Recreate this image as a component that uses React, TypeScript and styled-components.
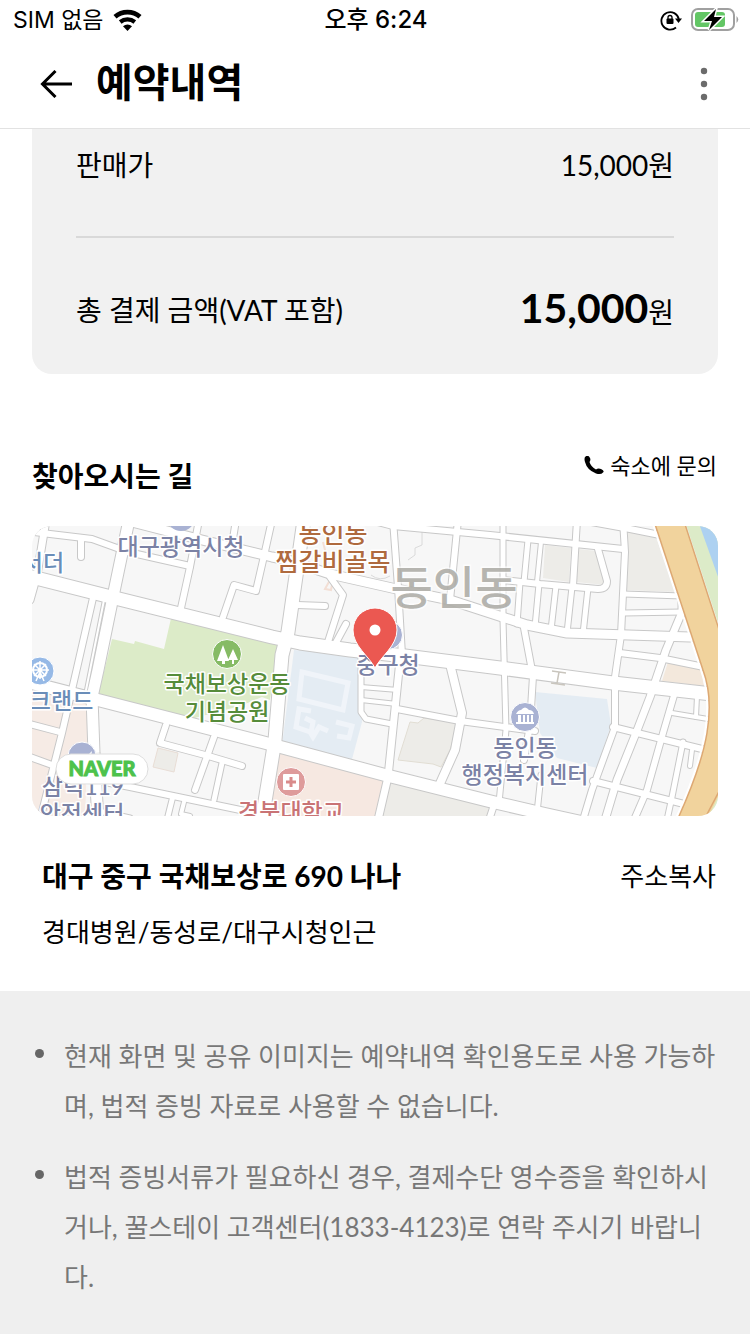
import React from "react";
import styled, { createGlobalStyle } from "styled-components";

const GlobalStyle = createGlobalStyle`
  * { box-sizing: border-box; }
  html, body { margin: 0; padding: 0; }
  html { background: #efefef; }
  body {
    background: #fff;
    color: #000;
    font-family: Lato, "Noto Sans CJK KR", sans-serif;
    font-size: 28px;
  }
  h1, h2, p, ul, dl, dd, dt { margin: 0; padding: 0; }
  button { border: 0; padding: 0; background: none; color: inherit; font: inherit; cursor: pointer; }
  svg { display: block; }
`;

const Header = styled.header`
  border-bottom: 1px solid #e2e2e2;
  background: #fff;
`;

const StatusBar = styled.div`
  display: grid;
  grid-template-columns: 1fr auto 1fr;
  align-items: center;
  height: 40px;
  padding: 0 11px 0 13px;
  font-family: Inter, "Noto Sans CJK KR", sans-serif;
  font-size: 23px;
  line-height: 32px;
`;

const StatusGroup = styled.div<{ $end?: boolean }>`
  display: flex;
  align-items: center;
  gap: 9px;
  justify-content: ${(p) => (p.$end ? "flex-end" : "flex-start")};
`;

const Clock = styled.time`
  font-size: 24px;
  font-weight: 500;
`;

const TitleBar = styled.div`
  display: flex;
  align-items: center;
  height: 88px;
  padding: 0 30px 0 40px;
`;

const IconButton = styled.button`
  display: flex;
  align-items: center;
  justify-content: center;
  width: 32px;
  height: 48px;
`;

const Title = styled.h1`
  flex: 1;
  padding: 0 0 5px 24px;
  font-size: 40px;
  line-height: 56px;
  font-weight: 700;
`;

const PriceCard = styled.dl`
  margin: 0 32px;
  padding: 11px 44px 0;
  border-radius: 0 0 20px 20px;
  background: #f1f1f1;
`;

const PriceRow = styled.div`
  display: flex;
  align-items: center;
  justify-content: space-between;
  height: 96px;
  padding-bottom: 46px;
  line-height: 48px;
  & + & {
    height: 138px;
    padding: 8px 0 0;
    border-top: 2px solid #d9d9d9;
  }
`;

const Price = styled.dd`
  white-space: nowrap;
`;

const Total = styled.strong`
  font-size: 41px;
  font-weight: 700;
`;

const Directions = styled.section`
  padding: 76px 32px 39px;
`;

const SectionHead = styled.div`
  display: flex;
  align-items: flex-start;
  justify-content: space-between;
  height: 76px;
`;

const SectionTitle = styled.h2`
  padding-top: 4px;
  font-size: 28px;
  line-height: 44px;
  font-weight: 700;
`;

const Contact = styled.button`
  display: flex;
  align-items: center;
  gap: 6px;
  padding-right: 1px;
  font-size: 22px;
  line-height: 32px;
`;

const MapFrame = styled.div`
  overflow: hidden;
  border-radius: 20px;
  height: 290px;
  svg { width: 100%; height: 100%; }
`;

const AddressRow = styled.div`
  display: flex;
  align-items: center;
  justify-content: space-between;
  margin-top: 40px;
  padding: 0 2px 0 10px;
  line-height: 40px;
`;

const Address = styled.p`
  font-size: 28px;
  font-weight: 700;
`;

const CopyButton = styled.button`
  font-size: 26px;
  line-height: 40px;
`;

const Nearby = styled.p`
  padding: 16px 10px 0;
  font-size: 26px;
  line-height: 40px;
`;

const Notices = styled.ul`
  display: flex;
  flex-direction: column;
  gap: 21px;
  padding: 40px 32px 32px 35px;
  list-style: none;
  background: #efefef;
  color: #777;
`;

const Notice = styled.li`
  display: flex;
  gap: 20px;
  font-size: 26px;
  line-height: 50px;
  word-break: break-all;
  &::before {
    content: "";
    flex: none;
    width: 9px;
    height: 9px;
    margin-top: 18px;
    border-radius: 50%;
    background: #666;
  }
`;

type Road = [string, number];

const roads: Road[] = [
  ["M20 574L115 598L272 637L300 643L350 650L405 656L500 668L613 683L712 694", 13],
  ["M129 520L115 587L98 670L92 697L94 753L98 820", 11],
  ["M20 680L98 700L262 742L385 775L493 802L545 814L590 824", 12],
  ["M304 520L288 632L282 655L275 740L262 820", 13],
  ["M20 530L50 534L92 539L128 552L190 566", 6],
  ["M81 541L81 557", 6],
  ["M46 520L37 575L30 600", 7],
  ["M128 521L202 540L272 557L288 560L330 574L392 588L450 600L490 613L527 625L567 633L690 637", 9],
  ["M199 520L190 567L181 608", 6],
  ["M236 520L232 545", 6],
  ["M272 520L264 556L256 591L234 585L223 617", 6],
  ["M93 598L77 668L62 733L42 812", 6],
  ["M104 600L86 690", 2],
  ["M30 724L60 732", 6],
  ["M30 757L52 765", 6],
  ["M166 725L160 743L205 755L242 766", 6],
  ["M214 737L195 790", 6],
  ["M222 763L214 800", 5],
  ["M100 781L130 787L250 812", 6],
  ["M173 796L167 820", 5],
  ["M184 802L181 814L190 816", 4],
  ["M94 810L130 818", 5],
  ["M297 605L325 606", 6],
  ["M330 577L343 595L327 645", 6],
  ["M346 624L333 648", 6],
  ["M393 520L398 587L402 655", 6],
  ["M370 520L393 526L490 535L623 549", 6],
  ["M458 520L450 600", 6],
  ["M361 655L361 712L366 719L392 724", 5],
  ["M361 687L398 690", 4],
  ["M361 700L397 704", 4],
  ["M400 660L388 777L378 820", 7],
  ["M397 709L460 721L535 731", 6],
  ["M450 664L462 713L455 750L438 788", 8],
  ["M494 805L489 820", 6],
  ["M503 520L503 620L506 730L499 803", 5],
  ["M524 628L533 676L530 725L524 760", 6],
  ["M577 520L573 586", 6],
  ["M580 520L630 529L660 535", 6],
  ["M623 520L625 552L621 635L615 677L615 727L592 790L583 820", 6],
  ["M528 540L524 582", 5],
  ["M541 542L537 582", 4],
  ["M504 580L540 584L598 589Q607 589 607 581L598 549", 6],
  ["M520 582L517 624", 5],
  ["M539 584L535 627", 5],
  ["M556 586L551 630", 5],
  ["M572 587L567 633", 5],
  ["M588 588L583 634", 5],
  ["M624 594L682 596", 5],
  ["M624 613L682 612", 5],
  ["M682 595L682 612L666 650L650 697L638 728L617 780L605 820", 7],
  ["M620 653L660 658L704 667", 6],
  ["M675 692L663 733L647 790L634 820", 6],
  ["M683 742L672 797L667 820", 5],
  ["M613 727L706 750", 6],
  ["M593 781L684 804", 6],
  ["M672 713L708 719", 4],
  ["M697 696L696 717", 4],
  ["M692 750L690 766", 4],
  ["M541 775L537 813", 5],
];

const Label = ({ x, y, color, size = 23, children }: { x: number; y: number; color: string; size?: number; children: string }) => (
  <text x={x} y={y} fill={color} fontSize={size} fontWeight={500} textAnchor="middle" stroke="#fff" strokeWidth={3} strokeLinejoin="round" paintOrder="stroke">
    {children}
  </text>
);

const NaverMap = () => (
  <svg viewBox="32 526 686 290" preserveAspectRatio="xMidYMid slice" role="img" aria-label="지도" fontFamily='Lato, "Noto Sans CJK KR", sans-serif'>
    <rect x="0" y="500" width="760" height="340" fill="#f7f7f7" />
    <path d="M30 682L89 699L85 820H30Z" fill="#f6ebe5" />
    <path d="M172 614L164 649L135 641L134 644L112 639L98 696L187 720L240 706L262 697L270 700L280 636Z" fill="#dcebc8" />
    <path d="M294 650L282 745L351 763L362 722V655Z" fill="#e4ecf3" />
    <path d="M276 750L388 778L375 820H265Z" fill="#f6e8e1" />
    <path d="M410 722L418 723L424 718L458 723L450 750L441 767L433 764L398 760Z" fill="#edece8" stroke="#e1ddd3" strokeWidth="1" />
    <path d="M388 783L490 806L487 820H380Z" fill="#edece8" />
    <path d="M545 545L571 548L569 582L543 578ZM578 549L597 551L605 585L576 582ZM628 530L655 534L675 592L626 590Z" fill="#edece8" />
    <path d="M535 692L607 699L611 725L597 768L557 758L540 733Z" fill="#e4ecf3" />
    <path d="M668 662L700 666L704 686L662 681Z" fill="#f3e8dc" />
    <path d="M158 748L178 753L174 772L153 767Z" fill="#edece8" stroke="#e8ddd5" />
    <g fill="none" stroke="#f0f4f9" strokeWidth="5">
      <path d="M302 672L348 683L343 710L299 699Z" />
      <path d="M311 711L299 709L296 727L310 732L313 737L319 727L328 731M305 718L313 722L311 733" />
      <path d="M336 722L352 726L349 738L337 736" />
    </g>
    <path d="M422 530V545L415 548V555L408 560M371 575Q380 582 390 576" fill="none" stroke="#dadada" />
    <path d="M323 542L327 558M326 574L330 580L325 589L331 590L333 580L331 574" fill="none" stroke="#f3dfd5" strokeWidth="2" />
    <g fill="none" stroke="#c8c8c8" strokeLinecap="round" strokeLinejoin="round">
      {roads.map(([d, w]) => <path key={d} d={d} strokeWidth={w + 2} />)}
    </g>
    <g fill="none" stroke="#fff" strokeLinecap="round" strokeLinejoin="round">
      {roads.map(([d, w]) => <path key={d} d={d} strokeWidth={w} />)}
    </g>
    <path d="M552 671L566 673M559 672L557 683M551 683L565 685" fill="none" stroke="#c9c5bd" strokeWidth="1.500" />
    <path d="M684 518L722 635V518Z" fill="#dcebc8" />
    <path d="M697 518L722 588V518Z" fill="#add1f1" />
    <path d="M722 782L704 820H722Z" fill="#dcebc8" />
    <path d="M653 518L703 670Q713 697 707 733T675 825L704 825L724 785V645L683 518Z" fill="#f1d39d" />
    <path d="M651 518L701 670Q711 697 705 733T673 825" fill="none" stroke="#fff" strokeWidth="2" />
    <path d="M653 518L703 670Q713 697 707 733T675 825M683 518L724 645M724 782L704 820" fill="none" stroke="#dda873" strokeWidth="1.500" />

    <circle cx="181" cy="517" r="14" fill="#a9b2d3" />
    <circle cx="40" cy="671" r="14" fill="#96b9e6" stroke="#fff" />
    <g fill="none" stroke="#fff" strokeWidth="2">
      <circle cx="40" cy="670" r="7" />
      <path d="M40 661V679M31 670H49M34 664L46 676M46 664L34 676M36 681L40 672L44 681" strokeWidth="1.500" />
    </g>
    <circle cx="227" cy="654" r="14.500" fill="#86bb65" stroke="#fff" />
    <path d="M223 645L217 661H222V664H225V661H229ZM233 649L228 660H232V664H234V660H238Z" fill="#fff" />
    <circle cx="291" cy="782" r="14.500" fill="#de9b9b" stroke="#fff" />
    <rect x="283" y="774" width="16" height="16" rx="1" fill="#fff" />
    <path d="M291 777V787M286 782H296" stroke="#d98b8b" strokeWidth="3" />
    <circle cx="525" cy="717" r="14.500" fill="#a9b2d3" stroke="#fff" />
    <path d="M516 714Q518 710 521 710Q525 705 529 710Q533 710 534 714ZM518 715H521V722H518ZM523 715H525V722H523ZM527 715H529V722H527ZM531 715H533V722H531ZM516 722H534V724H516Z" fill="#fff" />
    <circle cx="82" cy="756" r="14" fill="#a9b2d3" stroke="#fff" />
    <path d="M86 757Q90 753 92 751L91 757Z" fill="#fff" />
    <circle cx="388" cy="635" r="14.500" fill="#a9b2d3" stroke="#fff" />

    <Label x={181} y={555} color="#7b82a5">대구광역시청</Label>
    <Label x={43} y={571} color="#6a8db8">서더</Label>
    <Label x={333} y={543} color="#af6a3e" size={25}>동인동</Label>
    <Label x={333} y={571} color="#af6a3e" size={25}>찜갈비골목</Label>
    <text x="454" y="604" fill="#aaa9a3" fillOpacity="0.85" fontSize="46" fontWeight="500" textAnchor="middle" stroke="#fff" strokeOpacity="0.7" strokeWidth="3" paintOrder="stroke">동인동</text>
    <Label x={227} y={692} color="#568c3a">국채보상운동</Label>
    <Label x={227} y={720} color="#568c3a">기념공원</Label>
    <Label x={51} y={709} color="#6a8db8">아크랜드</Label>
    <Label x={388} y={673} color="#7b82a5">중구청</Label>
    <Label x={525} y={756} color="#7b82a5">동인동</Label>
    <Label x={525} y={783} color="#7b82a5">행정복지센터</Label>
    <Label x={83} y={795} color="#7b82a5">삼덕119</Label>
    <Label x={82} y={822} color="#7b82a5">안전센터</Label>
    <Label x={291} y={820} color="#c97375">경북대학교</Label>

    <path d="M375 668C369 656 353 646 353 630A22 22 0 0 1 397 630C397 646 381 656 375 668Z" fill="#eb5851" stroke="#fff" strokeWidth="1" />
    <circle cx="375" cy="630" r="5.500" fill="#fff" />
    <rect x="56" y="754" width="92" height="30" rx="15" fill="#fff" stroke="#ddd" />
    <text x="102" y="776" fill="#4dc24c" stroke="#4dc24c" strokeWidth="1" fontFamily="Lato, sans-serif" fontWeight="900" fontSize="20" textAnchor="middle">NAVER</text>
  </svg>
);

const WifiIcon = () => (
  <svg width="29" height="22" viewBox="0 0 29 22" aria-hidden="true">
    <path d="M2 7.800A19 19 0 0 1 27 7.800" fill="none" stroke="#000" strokeWidth="4.600" />
    <path d="M7.200 13A11.600 11.600 0 0 1 21.800 13" fill="none" stroke="#000" strokeWidth="4.200" />
    <path d="M10 17.200A7 7 0 0 1 19 17.200L14.500 22Z" />
  </svg>
);

const RotationLockIcon = () => (
  <svg width="22" height="22" viewBox="0 0 22 22" aria-hidden="true">
    <path d="M16 18.500A8.800 8.800 0 1 1 18.800 10" fill="none" stroke="#000" strokeWidth="1.800" />
    <path d="M15 9.500H22L18.500 14Z" />
    <rect x="6.500" y="9.500" width="7" height="5.500" rx="1" />
    <path d="M8 10V8.500A2 2 0 0 1 12 8.500V10" fill="none" stroke="#000" strokeWidth="1.300" />
  </svg>
);

const BatteryIcon = () => (
  <svg width="48" height="26" viewBox="0 0 48 26" aria-hidden="true">
    <rect x="1" y="2" width="42" height="21" rx="6" fill="none" stroke="#a0a0a0" strokeWidth="2" />
    <path d="M45.500 9Q49 12.500 45.500 16Z" fill="#a0a0a0" />
    <rect x="4" y="5" width="30" height="15" rx="3" fill="#63c665" />
    <path d="M25 2L13 14H21L18 23L31 10H23Z" stroke="#fff" strokeWidth="3" paintOrder="stroke" />
  </svg>
);

const BackIcon = () => (
  <svg width="32" height="28" viewBox="0 0 32 28" aria-hidden="true">
    <path d="M32 14H3M15.500 1L2.500 14L15.500 27" fill="none" stroke="#000" strokeWidth="3" />
  </svg>
);

const MoreIcon = () => (
  <svg width="8" height="34" viewBox="0 0 8 34" fill="#6b6b6b" aria-hidden="true">
    <circle cx="4" cy="4" r="3.200" /><circle cx="4" cy="17" r="3.200" /><circle cx="4" cy="30" r="3.200" />
  </svg>
);

const PhoneIcon = () => (
  <svg width="20" height="20" viewBox="0 0 20 20" aria-hidden="true">
    <path d="M1 1Q4 -2 6 2Q7 4 5.500 6Q7 11 12 13.500Q14 12 17 13Q21 15 19 16.500Q17 19 12 17.500Q3 14 1 6Q0 3 1 1Z" />
  </svg>
);

const notices = [
  "현재 화면 및 공유 이미지는 예약내역 확인용도로 사용 가능하며, 법적 증빙 자료로 사용할 수 없습니다.",
  "법적 증빙서류가 필요하신 경우, 결제수단 영수증을 확인하시거나, 꿀스테이 고객센터(1833-4123)로 연락 주시기 바랍니다.",
];

export default function App() {
  return (
    <>
      <GlobalStyle />
      <Header>
        <StatusBar>
          <StatusGroup>SIM 없음 <WifiIcon /></StatusGroup>
          <Clock>오후 6:24</Clock>
          <StatusGroup $end><RotationLockIcon /><BatteryIcon /></StatusGroup>
        </StatusBar>
        <TitleBar>
          <IconButton aria-label="뒤로"><BackIcon /></IconButton>
          <Title>예약내역</Title>
          <IconButton aria-label="더보기"><MoreIcon /></IconButton>
        </TitleBar>
      </Header>
      <main>
        <PriceCard>
          <PriceRow>
            <dt>판매가</dt>
            <Price>15,000원</Price>
          </PriceRow>
          <PriceRow>
            <dt>총 결제 금액(VAT 포함)</dt>
            <Price><Total>15,000</Total>원</Price>
          </PriceRow>
        </PriceCard>
        <Directions>
          <SectionHead>
            <SectionTitle>찾아오시는 길</SectionTitle>
            <Contact><PhoneIcon />숙소에 문의</Contact>
          </SectionHead>
          <MapFrame><NaverMap /></MapFrame>
          <AddressRow>
            <Address>대구 중구 국채보상로 690 나나</Address>
            <CopyButton>주소복사</CopyButton>
          </AddressRow>
          <Nearby>경대병원/동성로/대구시청인근</Nearby>
        </Directions>
        <Notices>
          {notices.map((text) => <Notice key={text}>{text}</Notice>)}
        </Notices>
      </main>
    </>
  );
}
